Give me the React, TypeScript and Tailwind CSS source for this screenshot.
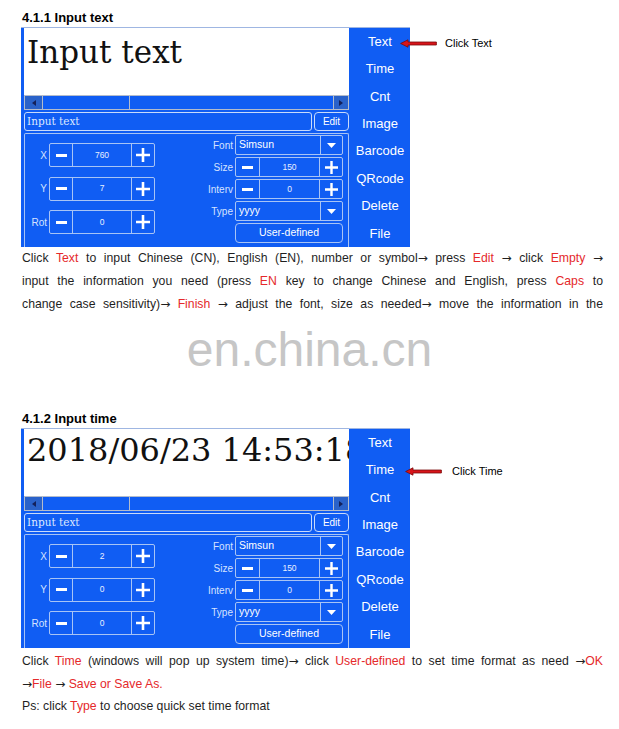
import React from 'react';

function PlusIcon({ size }: { size: number }) {
  return (
    <svg width={size} height={size} viewBox="0 0 14 14">
      <path d="M7 0v14M0 7h14" stroke="#fff" strokeWidth="2.6" />
    </svg>
  );
}

function BigStepper({ value }: { value: string }) {
  return (
    <div className="flex h-[24px] w-[106px] rounded-[2px] border border-[#a8c4f5]">
      <div className="flex w-[23px] items-center justify-center border-r border-[#a8c4f5]">
        <div className="h-[3px] w-[11px] bg-white" />
      </div>
      <div className="flex flex-1 items-center justify-center text-[8.5px] text-[#e8efff]">{value}</div>
      <div className="flex w-[23px] items-center justify-center border-l border-[#a8c4f5]">
        <PlusIcon size={14} />
      </div>
    </div>
  );
}

function SmallStepper({ value }: { value: string }) {
  return (
    <div className="flex h-[20px] w-[108px] rounded-[2px] border border-[#a8c4f5]">
      <div className="flex w-[24px] items-center justify-center border-r border-[#a8c4f5]">
        <div className="h-[3px] w-[11px] bg-white" />
      </div>
      <div className="flex flex-1 items-center justify-center text-[8.5px] text-[#e8efff]">{value}</div>
      <div className="flex w-[23px] items-center justify-center border-l border-[#a8c4f5]">
        <PlusIcon size={13} />
      </div>
    </div>
  );
}

function Select({ value }: { value: string }) {
  return (
    <div className="flex h-[20px] w-[108px] rounded-[2px] border border-[#a8c4f5]">
      <div className="flex flex-1 items-center pl-[3px] text-[10.5px] text-white">{value}</div>
      <div className="flex w-[22px] items-center justify-center border-l border-[#a8c4f5]">
        <svg width="9" height="5" viewBox="0 0 9 5">
          <path d="M0 0h9L4.5 5z" fill="#fff" />
        </svg>
      </div>
    </div>
  );
}

function LeftRow({ label, value }: { label: string; value: string }) {
  return (
    <div className="flex items-center gap-[2px]">
      <span className="w-[22px] text-right text-[10px] text-[#d6e3ff]">{label}</span>
      <BigStepper value={value} />
    </div>
  );
}

function RightRow({ label, children }: { label?: string; children: React.ReactNode }) {
  return (
    <div className="flex items-center justify-end gap-[2px]">
      {label && <span className="text-[10px] text-[#d6e3ff]">{label}</span>}
      {children}
    </div>
  );
}

const MENU = ['Text', 'Time', 'Cnt', 'Image', 'Barcode', 'QRcode', 'Delete', 'File'];

function Panel({
  bigText,
  bigClass,
  x,
  y,
  rot,
}: {
  bigText: string;
  bigClass: string;
  x: string;
  y: string;
  rot: string;
}) {
  return (
    <div className="ml-[21px] flex h-[220px] w-[389px] border-t border-[#9fb6e2] bg-[#105df3]">
      <div className="flex w-[329px] flex-col pl-[3px] pr-[1px]">
        <div
          className={`h-[67px] overflow-hidden whitespace-nowrap bg-white pl-[3px] font-['DejaVu_Serif',serif] leading-none text-[#111] ${bigClass}`}
        >
          {bigText}
        </div>
        <div className="flex h-[15px] border border-[#b4bccb]">
          <div className="flex w-[18px] items-center justify-center border-r border-[#b4bccb] bg-[#2a62c9]">
            <svg width="4" height="6" viewBox="0 0 4 6">
              <path d="M4 0v6L0 3z" fill="#14215a" />
            </svg>
          </div>
          <div className="w-[87px] border-r border-[#b4bccb]" />
          <div className="flex-1" />
          <div className="flex w-[15px] items-center justify-center border-l border-[#b4bccb] bg-[#2a62c9]">
            <svg width="4" height="6" viewBox="0 0 4 6">
              <path d="M0 0v6L4 3z" fill="#14215a" />
            </svg>
          </div>
        </div>
        <div className="mt-[2px] flex h-[19px] gap-[2px]">
          <div className="flex flex-1 items-center rounded-[3px] border border-[#c9dbfb] pl-[2px] font-['DejaVu_Serif',serif] text-[10.5px] text-[#dde8ff]">
            Input text
          </div>
          <div className="flex w-[35px] items-center justify-center rounded-[4px] border border-[#c9dbfb] text-[10px] text-white">
            Edit
          </div>
        </div>
        <div className="mt-[2px] flex flex-1 justify-between rounded-t-[2px] border-x border-t border-[#a8c4f5] pr-[5px]">
          <div className="flex flex-col gap-[9.5px] pt-[9px]">
            <LeftRow label="X" value={x} />
            <LeftRow label="Y" value={y} />
            <LeftRow label="Rot" value={rot} />
          </div>
          <div className="flex flex-col gap-[2px] pt-[1px]">
            <RightRow label="Font">
              <Select value="Simsun" />
            </RightRow>
            <RightRow label="Size">
              <SmallStepper value="150" />
            </RightRow>
            <RightRow label="Interv">
              <SmallStepper value="0" />
            </RightRow>
            <RightRow label="Type">
              <Select value="yyyy" />
            </RightRow>
            <RightRow>
              <div className="flex h-[20px] w-[108px] items-center justify-center rounded-[4px] border border-[#a8c4f5] text-[10.5px] text-white">
                User-defined
              </div>
            </RightRow>
          </div>
        </div>
      </div>
      <div className="flex w-[60px] flex-col">
        {MENU.map((m) => (
          <div key={m} className="flex h-[27.5px] items-center justify-center text-[13px] text-white">
            {m}
          </div>
        ))}
      </div>
    </div>
  );
}

function Arrow() {
  return (
    <svg width="37" height="9" viewBox="0 0 37 9">
      <path
        d="M0.6 4.5 L8 0.8 L8 3 L36.4 3 L36.4 6 L8 6 L8 8.2 Z"
        fill="#d8141a"
        stroke="#7a0a0a"
        strokeWidth="0.8"
      />
    </svg>
  );
}

const R = ({ children }: { children: React.ReactNode }) => (
  <span className="text-[#e5292b]">{children}</span>
);

const A = () => <span className="font-['DejaVu_Sans',sans-serif] text-[12px]">→</span>;

export default function App() {
  return (
    <div className="h-[729px] w-[619px] overflow-hidden bg-white font-['Liberation_Sans',Arial,sans-serif] text-[#1f1f1f]">
      <div className="relative pt-[10px]">
        <h2 className="ml-[22px] h-[16px] text-[13px] font-bold leading-[16px] text-black">4.1.1 Input text</h2>
        <div className="mt-[1px]">
          <Panel bigText="Input text" bigClass="pt-[9px] text-[31px]" x="760" y="7" rot="0" />
        </div>
        <div className="absolute left-[400px] top-[38px] flex items-center">
          <Arrow />
          <span className="ml-[8px] text-[11px] leading-none text-black">Click Text</span>
        </div>
      </div>

      <div className="ml-[22px] w-[581px] text-[12.25px] leading-[23px]">
        <p className="text-justify [text-align-last:justify]">
          Click <R>Text</R> to input Chinese (CN), English (EN), number or symbol<A /> press <R>Edit</R> <A /> click{' '}
          <R>Empty</R> <A />
        </p>
        <p className="text-justify [text-align-last:justify]">
          input the information you need (press <R>EN</R> key to change Chinese and English, press <R>Caps</R> to
        </p>
        <p className="text-justify [text-align-last:justify]">
          change case sensitivity)<A /> <R>Finish</R> <A /> adjust the font, size as needed<A /> move the information in the
        </p>
      </div>

      <div className="mt-[10px] h-[48px] text-center text-[48px] leading-none text-[#c6c6c6]">en.china.cn</div>

      <div className="relative mt-[37px]">
        <h2 className="ml-[22px] h-[16px] text-[13px] font-bold leading-[16px] text-black">4.1.2 Input time</h2>
        <div className="mt-[1px]">
          <Panel bigText="2018/06/23 14:53:18" bigClass="pt-[5px] text-[32px]" x="2" y="0" rot="0" />
        </div>
        <div className="absolute left-[405px] top-[55px] flex items-center">
          <Arrow />
          <span className="ml-[10px] text-[11px] leading-none text-black">Click Time</span>
        </div>
      </div>

      <div className="mt-[2px] ml-[22px] w-[581px] text-[12.25px] leading-[22.5px]">
        <p className="text-justify [text-align-last:justify]">
          Click <R>Time</R> (windows will pop up system time)<A /> click <R>User-defined</R> to set time format as need{' '}
          <A />
          <R>OK</R>
        </p>
        <p>
          <A />
          <R>File</R> <A /> <R>Save or Save As.</R>
        </p>
        <p>
          Ps: click <R>Type</R> to choose quick set time format
        </p>
      </div>
    </div>
  );
}
